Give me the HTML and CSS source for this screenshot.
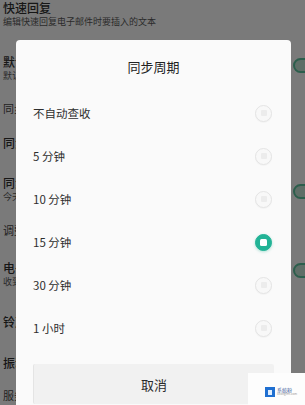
FILE: index.html
```html
<!DOCTYPE html>
<html lang="zh">
<head>
<meta charset="utf-8">
<link rel="stylesheet" href="styles.css">
</head>
<body>
<div class="screen">
  <div class="page">
    <div class="row r1"><div class="txt"><div class="title">快速回复</div><div class="sub">编辑快速回复电子邮件时要插入的文本</div></div></div>
    <div class="row r2"><div class="txt clip"><div class="title">默认账户</div><div class="sub">默认从此账户发送电子邮件</div></div><span class="toggle"></span></div>
    <div class="row r3"><div class="txt clip"><div class="plain">同步周期</div></div></div>
    <div class="row r4"><div class="txt clip"><div class="title">同步电子邮件</div></div></div>
    <div class="row r5"><div class="txt clip"><div class="title">同步通讯录</div><div class="sub">今天从此账户同步联系人</div></div><span class="toggle"></span></div>
    <div class="row r6"><div class="txt clip"><div class="plain">调整大小</div></div></div>
    <div class="row r7"><div class="txt clip"><div class="title">电子邮件通知</div><div class="sub">收到电子邮件时通知</div></div><span class="toggle"></span></div>
    <div class="row r8"><div class="txt clip"><div class="title">铃声</div></div></div>
    <div class="row r9"><div class="txt clip"><div class="title">振动</div></div></div>
    <div class="row r10"><div class="txt clip"><div class="plain">服务器设置</div></div></div>
  </div>

  <div class="dialog">
    <div class="dlg-title">同步周期</div>
    <ul class="options">
      <li class="option"><span class="label">不自动查收</span><span class="radio"></span></li>
      <li class="option"><span class="label">5 分钟</span><span class="radio"></span></li>
      <li class="option"><span class="label">10 分钟</span><span class="radio"></span></li>
      <li class="option"><span class="label">15 分钟</span><span class="radio on"></span></li>
      <li class="option"><span class="label">30 分钟</span><span class="radio"></span></li>
      <li class="option"><span class="label">1 小时</span><span class="radio"></span></li>
    </ul>
    <div class="cancel">取消</div>
  </div>

  <div class="badge"><span class="logo"><span class="logo-in"></span></span><span class="badge-txt"><span class="bt1">系统粉</span><span class="bt2">xitongfen.com</span></span></div>
</div>
</body>
</html>
```
FILE: styles.css
```css
* { box-sizing: border-box; margin: 0; padding: 0; }
html, body { width: 305px; height: 405px; overflow: hidden; }
body {
  font-family: "Noto Sans CJK SC", "Noto Sans", sans-serif;
  background: #7a7a7a;
}
.screen { position: relative; width: 305px; height: 405px; overflow: hidden; background: #7a7a7a; }
.page { display: flex; flex-direction: column; padding: 0 0 0 3px; }
.row { display: flex; justify-content: space-between; align-items: center; }
.txt { display: flex; flex-direction: column; }
.txt.clip { width: 13px; overflow: hidden; }
.title { font-size: 12px; line-height: 14px; color: #161616; font-weight: 500; white-space: nowrap; }
.plain { font-size: 11px; line-height: 14px; color: #222; white-space: nowrap; }
.sub { font-size: 9px; line-height: 13px; color: #2a2a2a; white-space: nowrap; }
.r1 { margin-top: 1px; }
.r2 { margin-top: 27px; }
.r3 { margin-top: 19px; }
.r4 { margin-top: 21px; }
.r5 { margin-top: 26px; }
.r6 { margin-top: 20px; }
.r7 { margin-top: 24px; }
.r8 { margin-top: 27px; }
.r9 { margin-top: 27px; }
.r10 { margin-top: 18px; }
.toggle {
  width: 28px; height: 15px; border-radius: 8px;
  border: 2px solid #2c5e4c; background: #5f6e67;
  margin-right: -16px;
}
.r2 .toggle { margin-top: -6px; }
.r5 .toggle { margin-top: 3px; }
.r7 .toggle { margin-top: -8px; }

.dialog {
  position: absolute; left: 16px; top: 40px; width: 275px; height: 380px;
  background: #fafafa; border-radius: 4px;
  padding: 18px 17px 0 17px;
  display: flex; flex-direction: column;
}
.dlg-title { font-size: 13px; line-height: 17px; text-align: center; color: #222; }
.options { list-style: none; margin-top: 16.5px; display: flex; flex-direction: column; }
.option { height: 43px; display: flex; align-items: center; justify-content: space-between; padding-right: 2px; }
.label { font-size: 11.5px; color: #2e2e2e; }
.radio {
  width: 17px; height: 17px; border-radius: 50%;
  border: 1px solid #e4e4e4; background: #f8f8f8;
  display: flex; align-items: center; justify-content: center;
  box-shadow: 0 1px 1px rgba(0,0,0,0.03);
}
.radio::after { content: ""; width: 6px; height: 6px; border-radius: 1px; background: #ececec; }
.radio.on { background: #22b396; border-color: #22b396; box-shadow: 0 1px 3px rgba(34,179,150,0.35); }
.radio.on::after { background: #ffffff; width: 7px; height: 7px; border-radius: 1.5px; }
.cancel {
  margin-top: 14.5px; height: 40px;
  background: #f1f1f1; border-left: 1px solid #e4e4e4; border-radius: 2px;
  display: flex; align-items: center; justify-content: center;
  font-size: 13px; color: #2a2a2a;
}
.badge {
  position: absolute; left: 248px; top: 373px; width: 57px; height: 32px;
  background: #fdfdfd;
  display: flex; align-items: center; gap: 2px; padding: 6px 0 0 17px;
}
.logo { width: 10px; height: 10px; background: #1f6fd1; display: flex; align-items: center; justify-content: center; }
.logo-in { width: 4px; height: 5px; background: #dfeeff; }
.badge-txt { display: flex; flex-direction: column; line-height: 5px; }
.bt1 { font-size: 5px; color: #3a5a9a; }
.bt2 { font-size: 3px; color: #999; }
```
